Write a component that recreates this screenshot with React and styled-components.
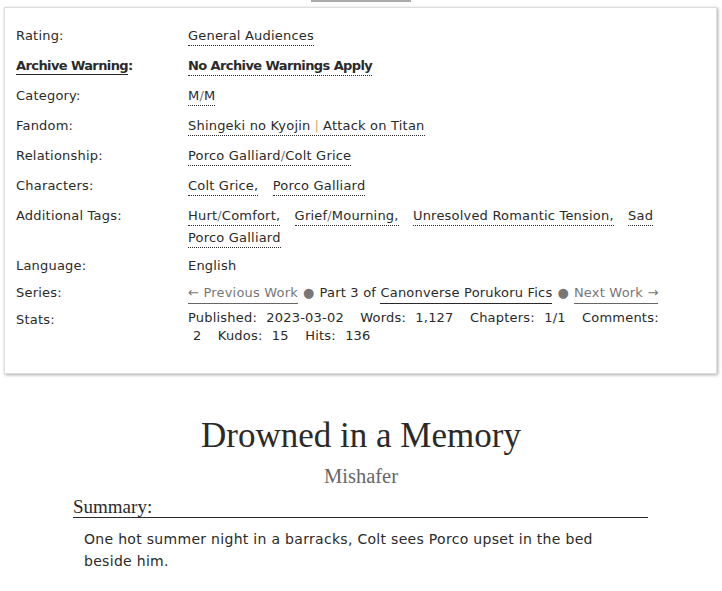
import React from "react";
import styled, { createGlobalStyle } from "styled-components";

const GlobalStyle = createGlobalStyle`
  body {
    margin: 0;
    background: #fff;
    color: #2a2a2a;
    font-family: "DejaVu Sans", "Liberation Sans", sans-serif;
  }
`;

const Page = styled.div`
  display: flex;
  flex-direction: column;
`;

const TopTab = styled.div`
  align-self: center;
  width: 100px;
  height: 2px;
  background: #aaa;
`;

const MetaBox = styled.dl`
  margin: 5px 5px 0 4px;
  padding: 17px 40px 28px 11px;
  border: 1px solid #ddd;
  box-shadow: 1px 1px 3px #aaa;
  display: grid;
  grid-template-columns: 172px 1fr;
  font-size: 13px;
  line-height: 22px;
  letter-spacing: 0.2px;
`;

const Label = styled.dt`
  margin: 0 0 ${(p) => p.$gap ?? 5}px;
  font-weight: ${(p) => (p.$bold ? "bold" : "normal")};
  letter-spacing: ${(p) => (p.$bold ? "-0.6px" : "inherit")};
`;

const Underlined = styled.span`
  border-bottom: 1px solid #2a2a2a;
  padding-bottom: 1px;
`;

const Value = styled.dd`
  margin: 0 0 ${(p) => p.$gap ?? 5}px;
  font-weight: ${(p) => (p.$bold ? "bold" : "normal")};
  letter-spacing: ${(p) => (p.$bold ? "-0.6px" : "inherit")};
`;

const Tag = styled.a`
  color: #2a2a2a;
  text-decoration: none;
  border-bottom: 1px dotted #2a2a2a;
  padding-bottom: 2px;
`;

const Slash = styled.span`
  color: #777;
`;

const Pipe = styled.span`
  color: #d8a870;
  margin: 0 4px;
`;

const Sep = styled.span`
  margin-right: 10px;
`;

const SeriesLink = styled.a`
  color: ${(p) => (p.$muted ? "#777" : "#2a2a2a")};
  text-decoration: none;
  border-bottom: 1px solid ${(p) => (p.$muted ? "#666" : "#2a2a2a")};
  padding-bottom: 3px;
`;

const Dot = styled.span`
  color: #777;
  margin: 0 5px;
`;

const StatList = styled.dd`
  margin: 0;
  line-height: 18px;
`;

const StatName = styled.span``;

const StatNum = styled.span`
  padding-left: 5px;
  margin-right: 12px;
`;

const Preface = styled.div`
  display: flex;
  flex-direction: column;
  align-items: center;
  padding: 40px 0 0;
  font-family: "Liberation Serif", "DejaVu Serif", serif;
`;

const Title = styled.h2`
  margin: 0;
  font-size: 35px;
  font-weight: normal;
  line-height: 44px;
`;

const Byline = styled.h3`
  margin: 3px 0 0;
  font-size: 20.5px;
  font-weight: normal;
  line-height: 30px;
  color: #666;
`;

const Summary = styled.div`
  align-self: stretch;
  margin: 6px 74px 0 73px;
`;

const SummaryHeading = styled.h3`
  margin: 0;
  font-size: 19px;
  font-weight: normal;
  line-height: 20px;
  border-bottom: 1px solid #2a2a2a;
`;

const SummaryText = styled.p`
  margin: 10px 0 0 11px;
  padding-right: 20px;
  font-family: "DejaVu Sans", "Liberation Sans", sans-serif;
  font-size: 14px;
  letter-spacing: 0.3px;
  line-height: 22px;
`;

const stats = [
  ["Published:", "2023-03-02"],
  ["Words:", "1,127"],
  ["Chapters:", "1/1"],
  ["Comments:", "2"],
  ["Kudos:", "15"],
  ["Hits:", "136"],
];

export default function App() {
  return (
    <Page>
      <GlobalStyle />
      <TopTab />
      <MetaBox>
        <Label $gap={8}>Rating:</Label>
        <Value $gap={8}>
          <Tag>General Audiences</Tag>
        </Value>

        <Label $gap={8} $bold>
          <Underlined>Archive Warning</Underlined>:
        </Label>
        <Value $gap={8} $bold>
          <Tag>No Archive Warnings Apply</Tag>
        </Value>

        <Label $gap={8}>Category:</Label>
        <Value $gap={8}>
          <Tag>
            M<Slash>/</Slash>M
          </Tag>
        </Value>

        <Label $gap={8}>Fandom:</Label>
        <Value $gap={8}>
          <Tag>
            Shingeki no Kyojin<Pipe>|</Pipe>Attack on Titan
          </Tag>
        </Value>

        <Label $gap={8}>Relationship:</Label>
        <Value $gap={8}>
          <Tag>
            Porco Galliard<Slash>/</Slash>Colt Grice
          </Tag>
        </Value>

        <Label $gap={8}>Characters:</Label>
        <Value $gap={8}>
          <Tag>Colt Grice,</Tag> <Sep />
          <Tag>Porco Galliard</Tag>
        </Value>

        <Label $gap={6}>Additional Tags:</Label>
        <Value $gap={6}>
          <Tag>
            Hurt<Slash>/</Slash>Comfort,
          </Tag>{" "}
          <Sep />
          <Tag>
            Grief<Slash>/</Slash>Mourning,
          </Tag>{" "}
          <Sep />
          <Tag>Unresolved Romantic Tension,</Tag> <Sep />
          <Tag>Sad Porco Galliard</Tag>
        </Value>

        <Label>Language:</Label>
        <Value>English</Value>

        <Label>Series:</Label>
        <Value>
          <SeriesLink $muted>← Previous Work</SeriesLink>
          <Dot>●</Dot>Part 3 of <SeriesLink>Canonverse Porukoru Fics</SeriesLink>
          <Dot>●</Dot>
          <SeriesLink $muted>Next Work →</SeriesLink>
        </Value>

        <Label>Stats:</Label>
        <StatList>
          {stats.map(([name, num]) => (
            <React.Fragment key={name}>
              <StatName>{name}</StatName> <StatNum>{num}</StatNum>{" "}
            </React.Fragment>
          ))}
        </StatList>
      </MetaBox>

      <Preface>
        <Title>Drowned in a Memory</Title>
        <Byline>Mishafer</Byline>
        <Summary>
          <SummaryHeading>Summary:</SummaryHeading>
          <SummaryText>
            One hot summer night in a barracks, Colt sees Porco upset in the
            bed beside him.
          </SummaryText>
        </Summary>
      </Preface>
    </Page>
  );
}
